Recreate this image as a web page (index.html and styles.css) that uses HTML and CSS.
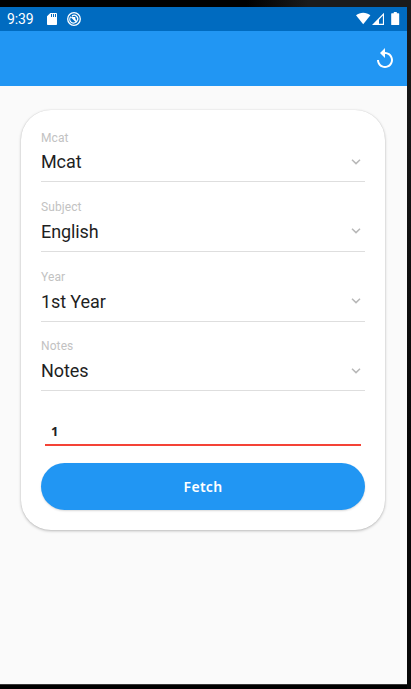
FILE: index.html
```html
<!DOCTYPE html>
<html lang="en">
<head>
<meta charset="utf-8">
<title>Fetch notes</title>
<link rel="stylesheet" href="styles.css">
</head>
<body>
<div class="screen">
  <div class="status">
    <span class="time">9:39</span>
    <svg class="sd" width="10" height="12" viewBox="0 0 10 12"><path fill="#fff" fill-rule="evenodd" d="M3.3 0H9.2Q10 0 10 .8V11.2Q10 12 9.2 12H.8Q0 12 0 11.2V3.3ZM4 1V4H5V1ZM6 1V4H7V1ZM8 1V4H9V1Z"/></svg>
    <svg class="sync" width="14" height="14" viewBox="0 0 14 14" fill="none" stroke="#fff"><circle cx="7" cy="7" r="6.3" stroke-width="1.3"/><path stroke-width="1.2" d="M4 4.6A3.7 3.7 0 0 0 9 10.1M5 3.8A3.7 3.7 0 0 1 10.2 8.8"/><path stroke-width="1.7" d="M4.6 4.8L10 10.2"/><path fill="#fff" stroke="none" d="M5 5L8.2 5L8.6 8.2Z"/></svg>
    <svg class="signals" width="45" height="14" viewBox="0 0 45 14"><path fill="#fff" d="M0 3.3C4-.2 10.4-.2 14.4 3.3L7.2 12.3Z"/><path fill="#fff" fill-rule="evenodd" d="M28 .7V13H16ZM26.9 3.5L23 7.7V11.8H26.9Z"/><path fill="#fff" d="M37.8 0H40.8V1.2H42.6Q43.2 1.2 43.2 1.8V12.4Q43.2 13 42.6 13H35.8Q35.2 13 35.2 12.4V1.8Q35.2 1.2 35.8 1.2H37.8Z"/></svg>
  </div>
  <header class="appbar">
    <svg width="24" height="24" viewBox="0 0 24 24"><path fill="#fff" d="M12 5V1L7 6l5 5V7c3.31 0 6 2.69 6 6s-2.69 6-6 6-6-2.69-6-6H4c0 4.42 3.58 8 8 8s8-3.58 8-8-3.58-8-8-8z"/></svg>
  </header>
  <main class="card">
    <div class="field"><div class="label">Mcat</div><div class="value">Mcat<svg class="chevron" width="10" height="6" viewBox="0 0 10 6"><path d="M1 .8L5 4.6L9 .8"/></svg></div></div>
    <div class="field"><div class="label">Subject</div><div class="value">English<svg class="chevron" width="10" height="6" viewBox="0 0 10 6"><path d="M1 .8L5 4.6L9 .8"/></svg></div></div>
    <div class="field"><div class="label">Year</div><div class="value">1st Year<svg class="chevron" width="10" height="6" viewBox="0 0 10 6"><path d="M1 .8L5 4.6L9 .8"/></svg></div></div>
    <div class="field"><div class="label">Notes</div><div class="value">Notes<svg class="chevron" width="10" height="6" viewBox="0 0 10 6"><path d="M1 .8L5 4.6L9 .8"/></svg></div></div>
    <div class="number">1</div>
    <button class="fetch">Fetch</button>
  </main>
</div>
</body>
</html>
```
FILE: styles.css
```css
* { box-sizing: border-box; }
body {
  margin: 0;
  width: 411px;
  height: 689px;
  padding-top: 7px;
  overflow: hidden;
  background: linear-gradient(90deg, #000 60%, #1b1b1b 75%) top / 100% 7px no-repeat, linear-gradient(#1b1b1b, #080808 65%);
  font-family: Roboto, sans-serif;
}
.screen {
  width: 407px;
  height: 678px;
  background: #fafafa;
  border-bottom: 1px solid #383838;
  box-shadow: 0 4px #000;
}
.status {
  display: flex;
  align-items: flex-start;
  height: 24px;
  padding-left: 7px;
  background: #006bc0;
  color: #fff;
}
.time { width: 40px; font-size: 14px; line-height: 25px; letter-spacing: -.1px; }
.sd { margin-top: 6px; }
.sync { margin: 5px 0 0 10px; }
.signals { margin: 5px 6px 0 auto; }
.appbar {
  display: flex;
  justify-content: flex-end;
  height: 55px;
  padding: 16px 10px 0 0;
  background: #2196f3;
}
.card {
  width: 364px;
  height: 420px;
  margin: 24px 0 0 21px;
  padding: 19.7px 20px 0;
  border-radius: 30px;
  background: #fff;
  box-shadow: 0 1px 3px rgba(0,0,0,.26), 0 0 1px rgba(0,0,0,.14);
}
.field {
  height: 69.6px;
  display: flex;
  flex-direction: column;
}
.label { font-size: 12px; line-height: 17px; color: #c2c2c2; letter-spacing: .1px; }
.value {
  display: flex;
  align-items: center;
  justify-content: space-between;
  height: 35.7px;
  padding: 0 4px 4.4px 0;
  border-bottom: 1px solid #dedede;
  font-size: 18px;
  letter-spacing: -.1px;
  color: #1f1f1f;
}
.chevron { fill: none; stroke: #b8b8b8; stroke-width: 1.5; }
.number {
  height: 38px;
  margin: 0 4px;
  padding: 14px 6px 0;
  border-bottom: 2px solid #f44336;
  font: 700 13px/18px "Noto Sans", sans-serif;
  color: #1f1f1f;
}
.fetch {
  display: block;
  width: 324px;
  height: 47px;
  margin-top: 17px;
  padding: 0;
  border: 0;
  border-radius: 24px;
  background: #2196f3;
  box-shadow: 0 1px 2px rgba(0,0,0,.15);
  color: #fff;
  font: 600 14px/46px "Noto Sans", sans-serif;
  letter-spacing: .3px;
}
```
